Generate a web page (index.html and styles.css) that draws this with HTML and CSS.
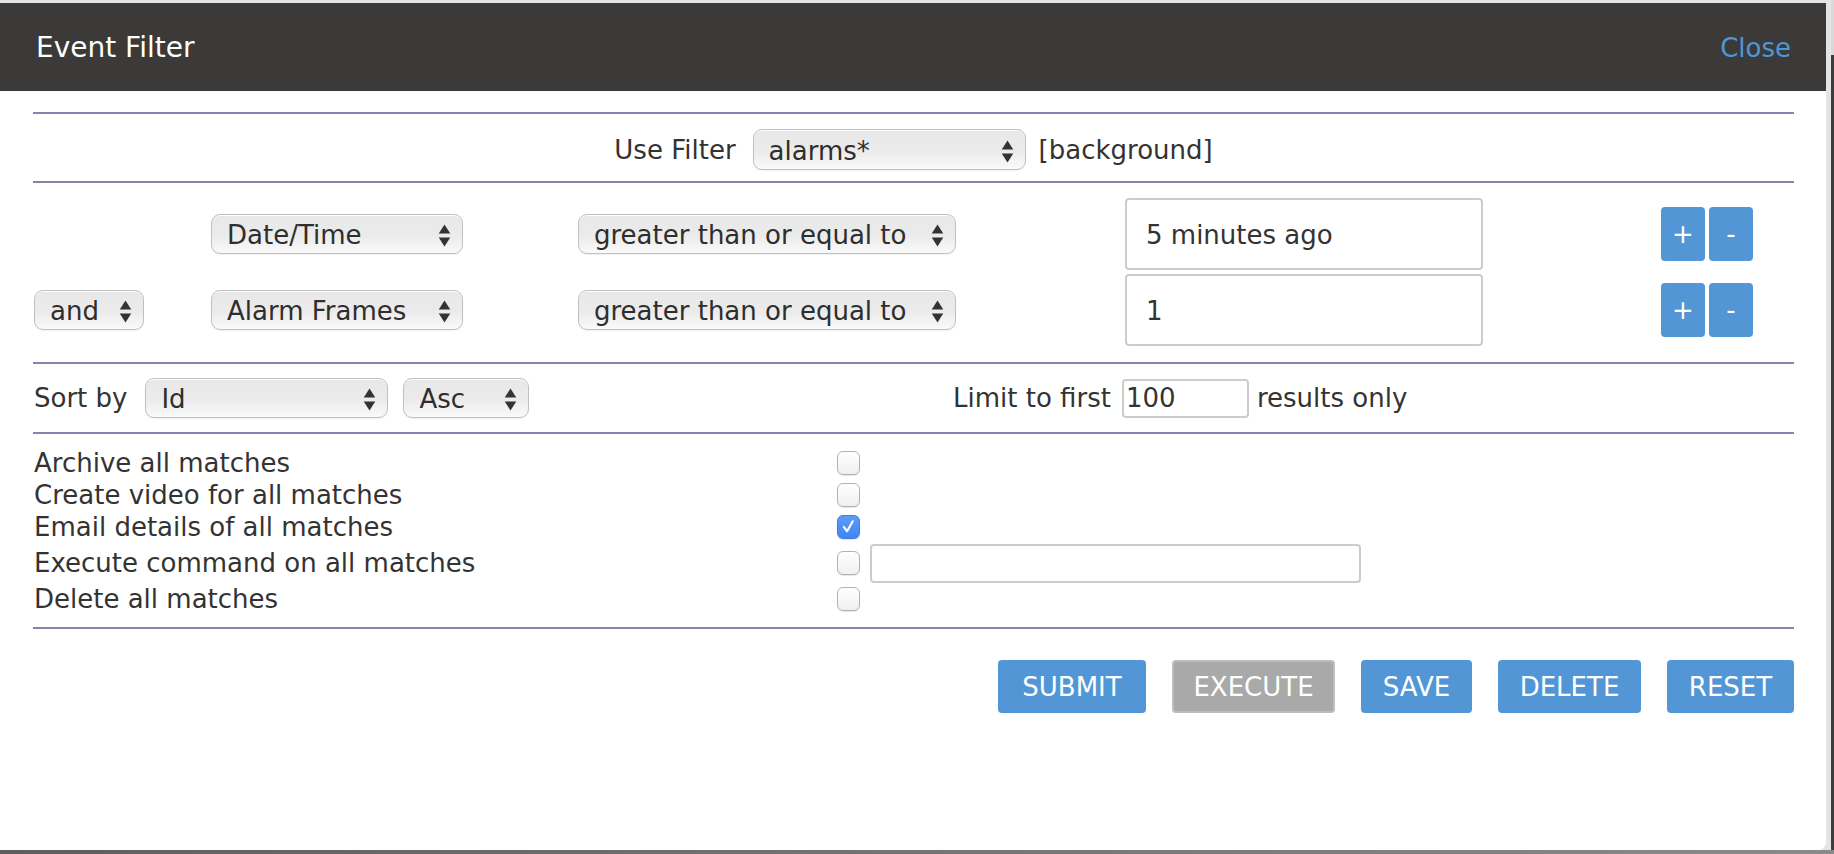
FILE: index.html
```html
<!DOCTYPE html>
<html lang="en">
<head>
<meta charset="utf-8">
<title>Event Filter</title>
<link rel="stylesheet" href="styles.css">
</head>
<body>
<div class="dialog">
  <div class="header">
    <h1 class="title">Event Filter</h1>
    <a class="close" href="#">Close</a>
  </div>
  <div class="content">
    <hr class="rule">
    <div class="use-filter">
      <span class="lbl">Use Filter</span>
      <span class="sel w-filter"><select><option>alarms*</option></select><svg viewBox="0 0 12 22"><polygon points="0.5,9 6,0.5 11.5,9"/><polygon points="0.5,13 6,21.5 11.5,13"/></svg></span>
      <span class="bg">[background]</span>
    </div>
    <hr class="rule">
    <div class="terms">
      <div></div>
      <span class="sel w-attr"><select><option>Date/Time</option></select><svg viewBox="0 0 12 22"><polygon points="0.5,9 6,0.5 11.5,9"/><polygon points="0.5,13 6,21.5 11.5,13"/></svg></span>
      <span class="sel w-op"><select><option>greater than or equal to</option></select><svg viewBox="0 0 12 22"><polygon points="0.5,9 6,0.5 11.5,9"/><polygon points="0.5,13 6,21.5 11.5,13"/></svg></span>
      <input class="value" type="text" value="5 minutes ago">
      <div class="pm"><button class="pmbtn">+</button><button class="pmbtn">-</button></div>

      <span class="sel w-conj"><select><option>and</option></select><svg viewBox="0 0 12 22"><polygon points="0.5,9 6,0.5 11.5,9"/><polygon points="0.5,13 6,21.5 11.5,13"/></svg></span>
      <span class="sel w-attr"><select><option>Alarm Frames</option></select><svg viewBox="0 0 12 22"><polygon points="0.5,9 6,0.5 11.5,9"/><polygon points="0.5,13 6,21.5 11.5,13"/></svg></span>
      <span class="sel w-op"><select><option>greater than or equal to</option></select><svg viewBox="0 0 12 22"><polygon points="0.5,9 6,0.5 11.5,9"/><polygon points="0.5,13 6,21.5 11.5,13"/></svg></span>
      <input class="value" type="text" value="1">
      <div class="pm"><button class="pmbtn">+</button><button class="pmbtn">-</button></div>
    </div>
    <hr class="rule">
    <div class="sort-row">
      <div class="sort">
        <span class="sort-lbl">Sort by</span>
        <span class="sel w-sort"><select><option>Id</option></select><svg viewBox="0 0 12 22"><polygon points="0.5,9 6,0.5 11.5,9"/><polygon points="0.5,13 6,21.5 11.5,13"/></svg></span>
        <span class="sel w-dir"><select><option>Asc</option></select><svg viewBox="0 0 12 22"><polygon points="0.5,9 6,0.5 11.5,9"/><polygon points="0.5,13 6,21.5 11.5,13"/></svg></span>
      </div>
      <div class="limit">
        <span>Limit to first</span>
        <input class="limit-input" type="text" value="100">
        <span>results only</span>
      </div>
    </div>
    <hr class="rule">
    <div class="actions">
      <div class="act-lbl">Archive all matches</div>
      <div class="act-ctl"><span class="cb"></span></div>
      <div class="act-lbl">Create video for all matches</div>
      <div class="act-ctl"><span class="cb"></span></div>
      <div class="act-lbl">Email details of all matches</div>
      <div class="act-ctl"><span class="cb on"><svg viewBox="0 0 20 20"><polyline points="5,10.5 8.5,15 14.5,4.5"/></svg></span></div>
      <div class="act-lbl">Execute command on all matches</div>
      <div class="act-ctl"><span class="cb"></span><input class="cmd" type="text"></div>
      <div class="act-lbl">Delete all matches</div>
      <div class="act-ctl"><span class="cb"></span></div>
    </div>
    <hr class="rule">
    <div class="buttons">
      <button class="btn b-submit">SUBMIT</button>
      <button class="btn grey b-execute">EXECUTE</button>
      <button class="btn b-save">SAVE</button>
      <button class="btn b-delete">DELETE</button>
      <button class="btn b-reset">RESET</button>
    </div>
  </div>
</div>
</body>
</html>
```

FILE: styles.css
```css
* { box-sizing: border-box; }
html, body { margin: 0; padding: 0; }
body {
  width: 1834px;
  height: 854px;
  overflow: hidden;
  font-family: "DejaVu Sans", Verdana, sans-serif;
  font-size: 26px;
  color: #333;
  background:
    linear-gradient(#d9d9d9, #d9d9d9) 1831px 0 / 3px 55px no-repeat,
    linear-gradient(to right, #e4e4e4 1831px, #3c3c3c 1831px) 0 0 / 100% 850px no-repeat,
    linear-gradient(to right, #5e5e5e, #8a8a8a);
}
.dialog {
  margin-top: 3px;
  width: 1826px;
  height: 847px;
  background: #fff;
  border-bottom-right-radius: 8px;
}
.header {
  height: 88px;
  background: #3b3a38;
  display: flex;
  align-items: center;
  justify-content: space-between;
  padding: 1px 35px 0 36px;
}
.title {
  margin: 0;
  font-size: 28px;
  font-weight: normal;
  color: #fff;
}
.close {
  color: #4f96d7;
  font-size: 26px;
  text-decoration: none;
}
.content { padding: 21px 32px 0 33px; }
.rule {
  border: 0;
  height: 2px;
  background: #8583b0;
  margin: 0;
}

/* selects */
.sel {
  position: relative;
  display: inline-block;
  height: 40px;
}
.sel select {
  -webkit-appearance: none;
  appearance: none;
  width: 100%;
  height: 100%;
  font: inherit;
  color: #2e2e2e;
  border: 1.5px solid #c0c0c0;
  border-radius: 9px;
  background: linear-gradient(#e8e8e8, #ebebeb 55%, #fafafa);
  box-shadow: inset 0 1px 0 #fff, 0 1px 1px rgba(0, 0, 0, 0.06);
  padding: 2px 30px 0 15px;
  margin: 0;
}
.sel svg {
  position: absolute;
  right: 12px;
  top: 50%;
  width: 13px;
  height: 23px;
  margin-top: -10px;
  fill: #333;
  pointer-events: none;
}
.w-filter { width: 273px; height: 41px; }
.w-attr { width: 252px; }
.w-op { width: 378px; }
.w-conj { width: 110px; margin-left: 1px; }
.w-sort { width: 243px; }
.w-dir { width: 126px; margin-left: 15px; }

/* use filter row */
.use-filter {
  display: flex;
  justify-content: center;
  align-items: center;
  padding: 15px 0 11px;
}
.use-filter .lbl { margin-right: 17px; }
.use-filter .bg { margin-left: 13px; }

/* terms */
.terms {
  display: grid;
  grid-template-columns: 178px 367px 547px 536px auto;
  grid-auto-rows: 72px;
  row-gap: 4px;
  align-items: center;
  padding: 15px 0 16px;
}
.value {
  width: 358px;
  height: 72px;
  border: 2px solid #cccccc;
  border-radius: 4px;
  padding: 2px 19px 0;
  font: inherit;
  color: #333;
  margin: 0;
}
.pm { display: flex; gap: 4px; }
.pmbtn {
  width: 44px;
  height: 54px;
  border: 0;
  border-radius: 4px;
  background: #5296d6;
  color: #fff;
  font-family: inherit;
  font-size: 26px;
  padding: 0;
}

/* sort row */
.sort-row {
  display: grid;
  grid-template-columns: 920px auto;
  align-items: center;
  padding: 14px 0;
}
.sort { display: flex; align-items: center; }
.sort-lbl { margin-left: 1px; margin-right: 18px; }
.limit { display: flex; align-items: center; }
.limit-input {
  width: 127px;
  height: 39px;
  margin: 0 8px 0 11px;
  border: 2px solid #cccccc;
  border-radius: 4px;
  padding: 0 2px;
  font: inherit;
  color: #333;
}

/* actions */
.actions {
  display: grid;
  grid-template-columns: 804px auto;
  grid-template-rows: 32px 32px 32px 40px 32px;
  align-items: center;
  padding: 13px 0 12px;
}
.act-lbl { padding-left: 1px; line-height: 32px; }
.act-ctl { display: flex; align-items: center; gap: 10px; }
.cb {
  display: inline-block;
  width: 23px;
  height: 24px;
  border: 1.5px solid #b2b2b2;
  border-radius: 6px;
  background: linear-gradient(#ffffff, #f0f0f0);
  box-shadow: 0 1px 1px rgba(0, 0, 0, 0.1);
  position: relative;
}
.cb.on {
  background: linear-gradient(#5d9cf8, #3f86f4);
  border-color: #3d7fe4;
}
.cb.on svg {
  position: absolute;
  left: 1px;
  top: 1px;
  width: 19px;
  height: 19px;
  fill: none;
  stroke: #fff;
  stroke-width: 2.2;
  stroke-linecap: round;
  stroke-linejoin: round;
}
.cmd {
  width: 491px;
  height: 39px;
  border: 2px solid #cccccc;
  border-radius: 4px;
  font: inherit;
  margin: 0;
}

/* buttons */
.buttons {
  display: flex;
  justify-content: flex-end;
  gap: 26px;
  margin-top: 31px;
}
.btn {
  height: 53px;
  border: 0;
  border-radius: 4px;
  background: #5296d6;
  color: #fff;
  font-family: inherit;
  font-size: 26px;
  padding: 0;
}
.btn.grey {
  background: #a9a9a9;
  border: 2px solid #bdbdbd;
}
.b-submit { width: 148px; }
.b-execute { width: 163px; }
.b-save { width: 111px; }
.b-delete { width: 143px; }
.b-reset { width: 127px; }
```
